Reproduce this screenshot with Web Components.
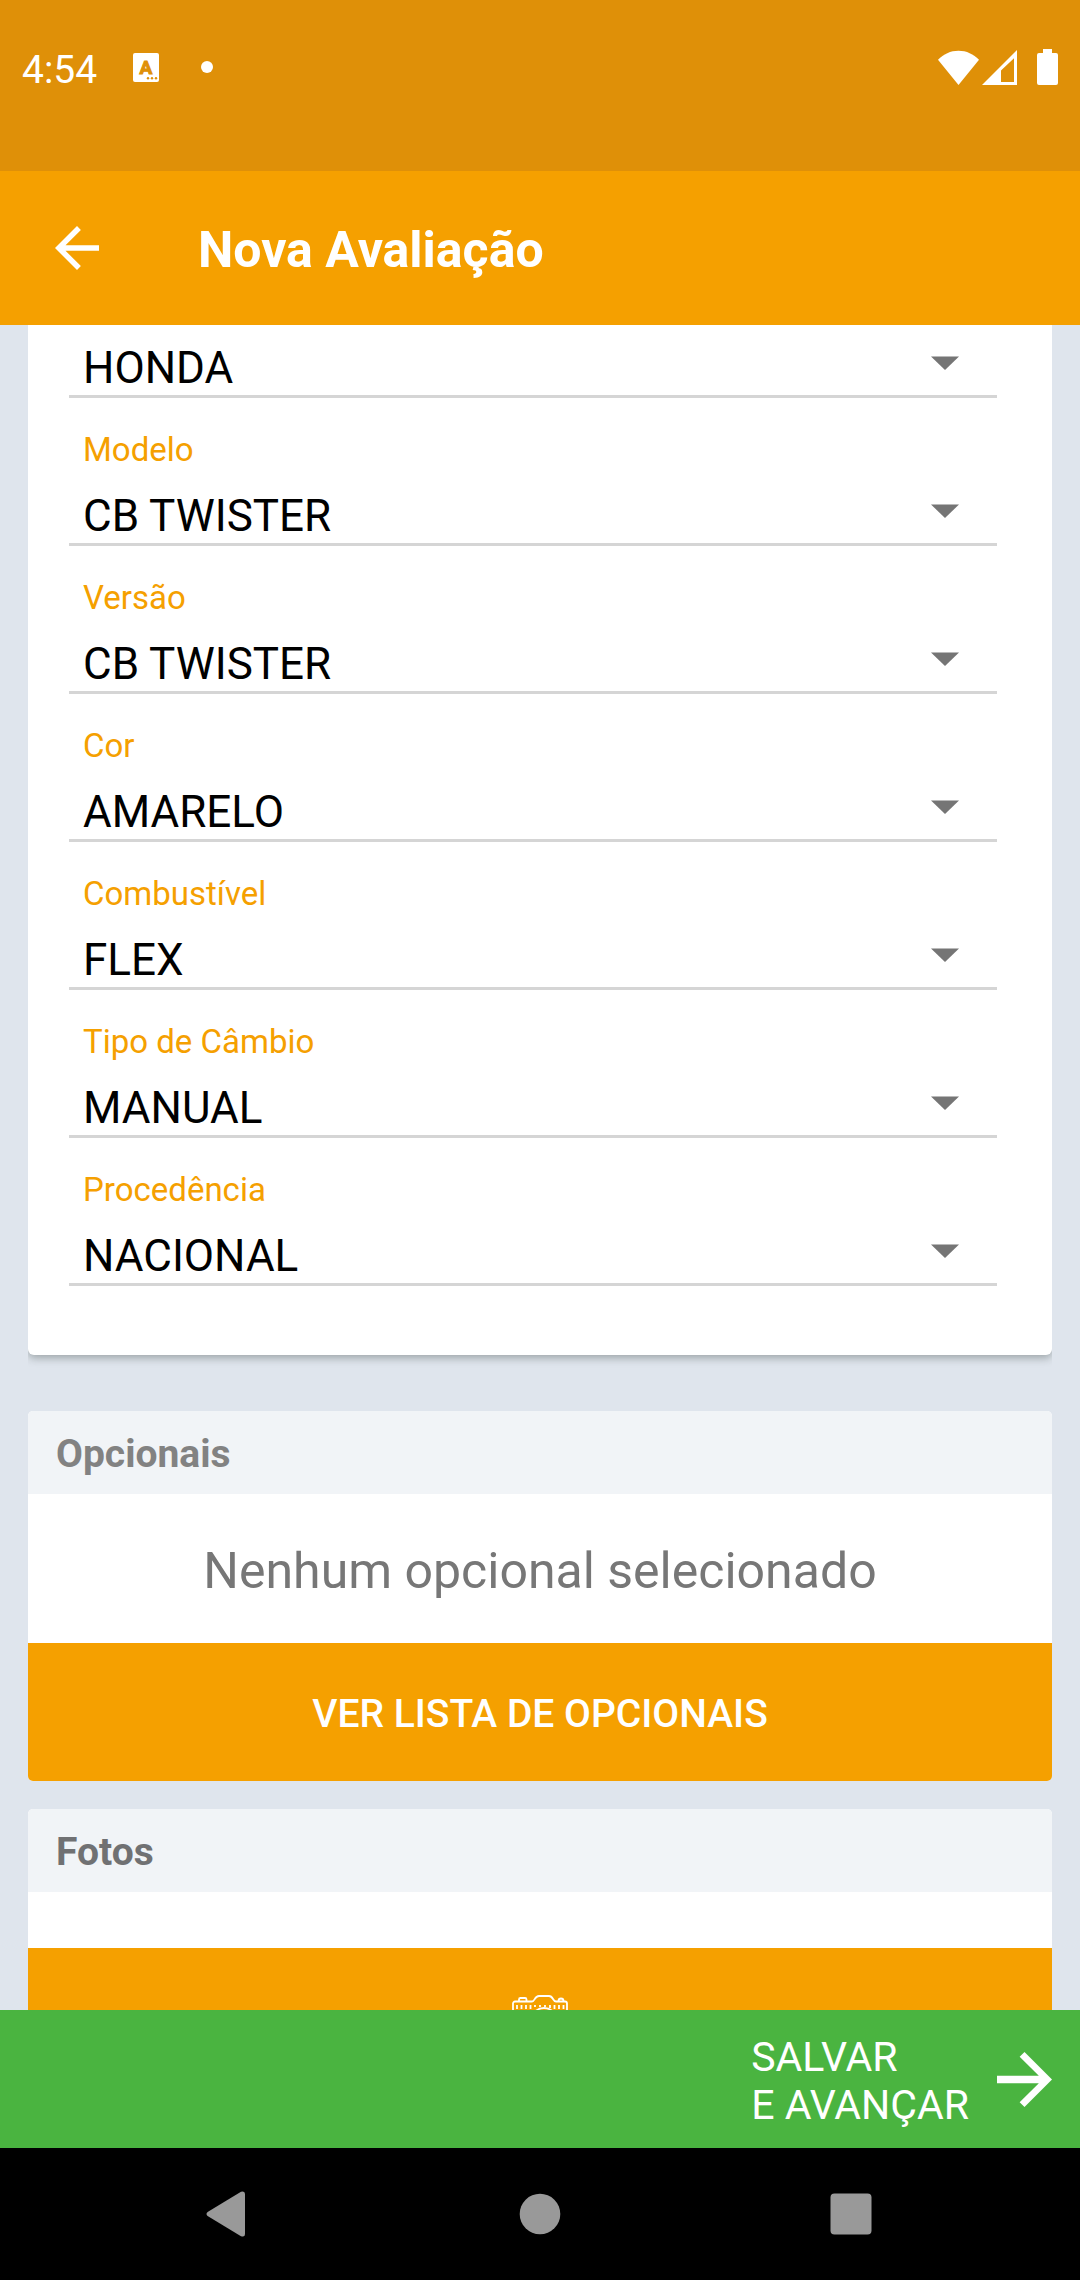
<!DOCTYPE html>
<html lang="pt-BR">
<head>
<meta charset="utf-8">
<meta name="viewport" content="width=device-width, initial-scale=1">
<title>Nova Avaliação</title>
<style>
  :root {
    --brand: #f5a000;
    --brand-dark: #df9008;
    --page: #dfe5ed;
    --panel-head: #f1f4f7;
    --go: #4ab440;
    --gutter: 28px;
  }
  body { margin: 0; font-family: Roboto, "Noto Sans", sans-serif; background: var(--page); }
</style>
</head>
<body>
<app-shell>
  <status-bar slot="top" time="4:54"></status-bar>
  <app-header slot="top">Nova Avaliação</app-header>

  <form-card>
    <select-field label="Marca" value="HONDA" compact></select-field>
    <select-field label="Modelo" value="CB TWISTER"></select-field>
    <select-field label="Versão" value="CB TWISTER"></select-field>
    <select-field label="Cor" value="AMARELO"></select-field>
    <select-field label="Combustível" value="FLEX"></select-field>
    <select-field label="Tipo de Câmbio" value="MANUAL"></select-field>
    <select-field label="Procedência" value="NACIONAL"></select-field>
  </form-card>

  <section-panel style="--title: #828282">
    <span slot="title">Opcionais</span>
    <empty-note>Nenhum opcional selecionado</empty-note>
    <action-button slot="action">VER LISTA DE OPCIONAIS</action-button>
  </section-panel>

  <section-panel style="--title: #707173">
    <span slot="title">Fotos</span>
    <action-button slot="action" label="Adicionar foto"><camera-icon></camera-icon></action-button>
  </section-panel>

  <save-bar slot="bottom">SALVAR<br>E AVANÇAR</save-bar>
  <system-nav slot="bottom"></system-nav>
</app-shell>

<script>
  class BaseElement extends HTMLElement {
    connectedCallback() {
      if (this.shadowRoot) return;
      this.attachShadow({ mode: 'open' }).innerHTML =
        `<style>*{box-sizing:border-box}svg{display:block}button{font:inherit;color:inherit;border:0;padding:0;margin:0;background:none}${this.css()}</style>${this.html()}`;
    }
  }

  customElements.define('app-shell', class extends BaseElement {
    css() { return `
      :host { display: flex; flex-direction: column; height: 100vh; background: var(--page); }
      main { flex: 1; min-height: 0; overflow-y: auto; scrollbar-width: none; padding: 0 var(--gutter); }
      .column { display: flex; flex-direction: column; gap: 28px; overflow-x: clip; }`; }
    html() { return `<slot name="top"></slot><main><div class="column"><slot></slot></div></main><slot name="bottom"></slot>`; }
  });

  customElements.define('status-bar', class extends BaseElement {
    css() { return `
      :host { display: block; flex: none; padding-bottom: 37px; background: var(--brand-dark); color: #fff; }
      .row { display: flex; align-items: center; height: 134px; padding: 0 22px; }
      time { font-size: 39px; line-height: 48px; padding-top: 5px; }
      .note { margin-left: 36px; }
      .dot { width: 12px; height: 12px; border-radius: 50%; background: #fff; margin-left: 42px; }
      .signals { display: flex; align-items: center; margin-left: auto; }
      .signals svg { fill: #fff; }
      .cell { margin-left: 3px; }
      .battery { margin-left: 20px; }
      .note text { font: 700 19px Roboto, sans-serif; fill: var(--brand-dark); stroke: var(--brand-dark); stroke-width: 1; text-anchor: middle; }`; }
    html() { return `
      <div class="row">
        <time>${this.getAttribute('time')}</time>
        <svg class="note" width="26" height="29" viewBox="0 0 26 29">
          <rect width="26" height="29" rx="2" fill="#fff"/>
          <text x="13" y="21">A</text>
          <g fill="#df9008"><circle cx="15" cy="25.2" r="1.2"/><circle cx="19" cy="25.2" r="1.2"/><circle cx="23" cy="25.2" r="1.2"/></g>
        </svg>
        <span class="dot"></span>
        <div class="signals">
          <svg width="41" height="35" viewBox="0 0 41 35"><path d="M20.500 35L0 9.800C5.500 4 12.500.7 20.500.7S35.500 4 41 9.800z"/></svg>
          <svg class="cell" width="35" height="35" viewBox="0 0 35 35"><path fill-rule="evenodd" d="M0 35L35 0v35zM19 20.500V32H32V8.200z"/></svg>
          <svg class="battery" width="21" height="36" viewBox="0 0 21 36"><path d="M6 0h9v4h4a2 2 0 0 1 2 2v28a2 2 0 0 1-2 2H2a2 2 0 0 1-2-2V6a2 2 0 0 1 2-2h4z"/></svg>
        </div>
      </div>`; }
  });

  customElements.define('app-header', class extends BaseElement {
    css() { return `
      :host { display: flex; flex: none; align-items: center; gap: 88px; height: 154px; padding: 0 44px; background: var(--brand); color: #fff; }
      svg { fill: #fff; }
      h1 { margin: 0; padding-top: 4px; font-size: 50px; line-height: 60px; font-weight: 700; }`; }
    html() { return `
      <button aria-label="Voltar"><svg width="66" height="66" viewBox="0 0 24 24"><path d="M20 11H7.830l5.590-5.590L12 4l-8 8 8 8 1.410-1.410L7.830 13H20z"/></svg></button>
      <h1><slot></slot></h1>`; }
  });

  customElements.define('form-card', class extends BaseElement {
    css() { return `
      :host { display: block; margin-bottom: 28px; padding: 0 55px 69px 41px; background: #fff; border-radius: 0 0 6px 6px; box-shadow: 0 3px 8px rgba(40, 50, 45, .36); }`; }
    html() { return `<slot></slot>`; }
  });

  customElements.define('select-field', class extends BaseElement {
    css() { return `
      :host { display: block; border-bottom: 3px solid #d5d5d5; }
      label { display: block; padding: 32px 14px 0; font-size: 33px; line-height: 40px; color: var(--brand); }
      .control { display: grid; align-items: end; }
      .control > * { grid-area: 1 / 1; }
      select { appearance: none; width: 100%; height: 73px; margin: 0; padding: 20px 14px 1px; border: 0; border-radius: 0; background: none;
        font: 400 44px/52px Roboto, "Noto Sans", sans-serif; color: #000; }
      :host([compact]) select { height: 70px; padding-top: 17px; }
      svg { justify-self: end; margin: 0 38px 25px 0; fill: #757575; pointer-events: none; }`; }
    html() {
      const label = this.getAttribute('label'), value = this.getAttribute('value');
      const compact = this.hasAttribute('compact');
      return `${compact ? '' : `<label for="field">${label}</label>`}
        <div class="control">
          <select id="field"${compact ? ` aria-label="${label}"` : ''}><option>${value}</option></select>
          <svg width="28" height="14" viewBox="0 0 28 14"><path d="M0 .5h28L14 14z"/></svg>
        </div>`;
    }
  });

  customElements.define('section-panel', class extends BaseElement {
    css() { return `
      :host { display: block; border-radius: 5px; overflow: hidden; background: #fff; }
      h2 { margin: 0; height: 83px; padding: 21px 28px 0; background: var(--panel-head); color: var(--title); font-size: 39px; line-height: 44px; font-weight: 700; }
      .body { min-height: 56px; }`; }
    html() { return `<h2><slot name="title"></slot></h2><div class="body"><slot></slot></div><slot name="action"></slot>`; }
  });

  customElements.define('empty-note', class extends BaseElement {
    css() { return `
      :host { display: block; padding: 47px 28px 42px; text-align: center; font-size: 50px; line-height: 60px; color: #777; }`; }
    html() { return `<slot></slot>`; }
  });

  customElements.define('action-button', class extends BaseElement {
    css() { return `
      :host { display: block; }
      button { display: flex; align-items: center; justify-content: center; width: 100%; height: 138px; background: var(--brand); color: #fff; font-size: 39px; line-height: 48px; font-weight: 500; }
      span { padding-top: 4px; }`; }
    html() {
      const label = this.getAttribute('label');
      return label ? `<button aria-label="${label}"><slot></slot></button>` : `<button><span><slot></slot></span></button>`;
    }
  });

  customElements.define('camera-icon', class extends BaseElement {
    css() { return `:host { display: block; } svg { fill: none; stroke: #fff; stroke-width: 1.8; stroke-linejoin: round; }`; }
    html() { return `
      <svg width="56" height="44" viewBox="0 0 56 44">
        <path d="M3 6.500H20C23 6.500 22.500 1 27 1H37C41.500 1 40.500 6.500 44 6.500H53A2 2 0 0 1 55 8.500V41A2 2 0 0 1 53 43H3A2 2 0 0 1 1 41V8.500A2 2 0 0 1 3 6.500z"/>
        <path d="M7 6V4.500A1.500 1.500 0 0 1 8.500 3H13A1.500 1.500 0 0 1 14.500 4.500V6M46.500 6A2 2 0 0 1 51.500 6"/>
        <path d="M5 10v4M9.500 10v4M14 10v4M18.500 10v4M23 10v2M42.500 10v4M47 10v4M51.500 10v4M28 10v2M33 10v2M38 10v3"/>
        <circle cx="32" cy="26" r="13"/><circle cx="32" cy="26" r="8"/>
      </svg>`; }
  });

  customElements.define('save-bar', class extends BaseElement {
    css() { return `
      :host { display: block; flex: none; background: var(--go); color: #fff; }
      button { display: flex; align-items: center; justify-content: flex-end; gap: 28px; width: 100%; height: 138px; padding: 0 28px; text-align: left; font-size: 41px; line-height: 48px; }
      span { padding-top: 4px; }
      svg { fill: #fff; }`; }
    html() { return `
      <button><span><slot></slot></span>
        <svg width="55" height="55" viewBox="4 4 16 16"><path d="M12 4l-1.410 1.410L16.170 10.900H4v2.200h12.170l-5.580 5.490L12 20l8-8z"/></svg>
      </button>`; }
  });

  customElements.define('system-nav', class extends BaseElement {
    css() { return `
      :host { display: grid; flex: none; grid-template-columns: repeat(3, 1fr); height: 132px; padding: 0 6.8%; background: #000; }
      button { display: grid; place-items: center; }
      svg { fill: #999; }`; }
    html() { return `
      <button aria-label="Voltar"><svg width="46" height="46" viewBox="0 0 46 46"><path d="M1.600 21L35 .8Q39 -.500 39 3V43Q39 46.500 35 45.200L1.600 25Q-.600 23 1.600 21z"/></svg></button>
      <button aria-label="Início"><svg width="42" height="42" viewBox="0 0 42 42"><circle cx="21" cy="21" r="20.300"/></svg></button>
      <button aria-label="Recentes"><svg width="42" height="42" viewBox="0 0 42 42"><rect x=".5" y=".5" width="41" height="41" rx="4"/></svg></button>`; }
  });
</script>
</body>
</html>
